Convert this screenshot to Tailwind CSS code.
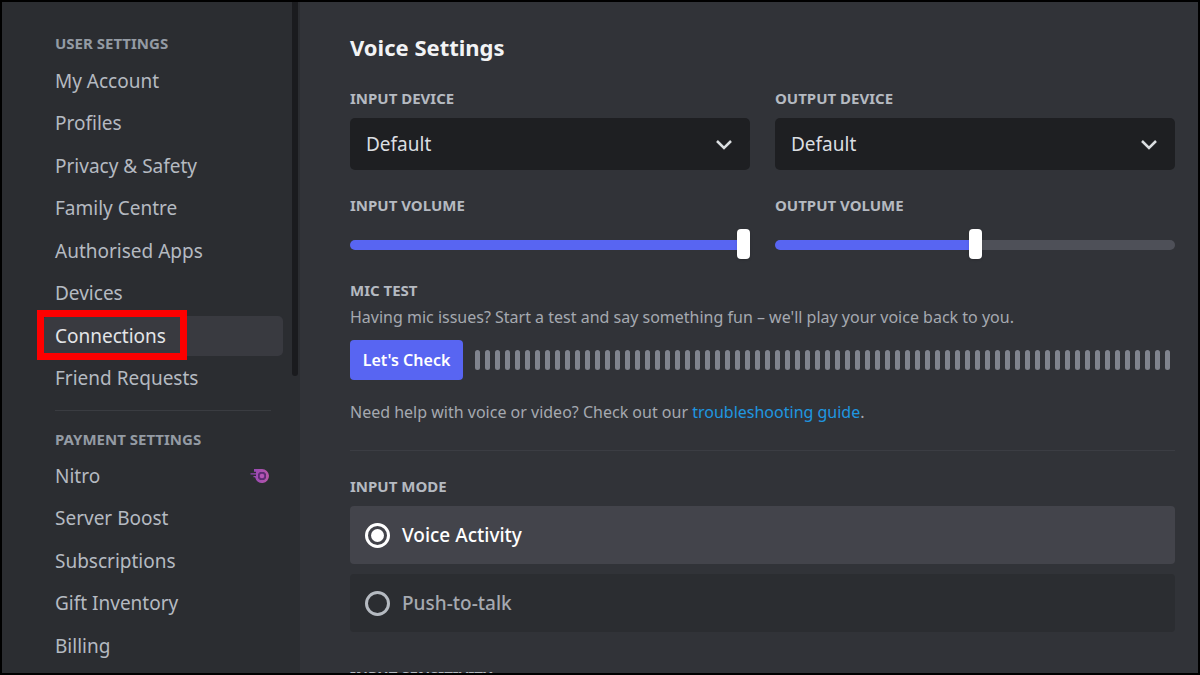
<!DOCTYPE html>
<html lang="en">
<head>
  <meta charset="UTF-8">
  <meta name="viewport" content="width=device-width, initial-scale=1.0">
  <title>Voice Settings</title>
  <script src="https://cdn.jsdelivr.net/npm/@tailwindcss/browser@4"></script>
</head>
<body class="flex h-screen overflow-hidden border-2 border-black bg-[#313338] font-['Noto_Sans',sans-serif] text-[#b5bac1]">

  <!-- Sidebar -->
  <nav class="relative w-[298px] shrink-0 bg-[#2b2d31] pt-[31px] pr-[17px] pl-[41px]">
    <h2 class="mb-2 px-3 text-[15px] leading-5 font-bold text-[#949ba4] uppercase">User Settings</h2>
    <ul class="text-[19px] leading-10">
      <li class="mb-0.5 even:mb-[3px]"><a href="#" class="block px-3">My Account</a></li>
      <li class="mb-0.5 even:mb-[3px]"><a href="#" class="block px-3">Profiles</a></li>
      <li class="mb-0.5 even:mb-[3px]"><a href="#" class="block px-3">Privacy &amp; Safety</a></li>
      <li class="mb-0.5 even:mb-[3px]"><a href="#" class="block px-3">Family Centre</a></li>
      <li class="mb-0.5 even:mb-[3px]"><a href="#" class="block px-3">Authorised Apps</a></li>
      <li class="mb-0.5 even:mb-[3px]"><a href="#" class="block px-3">Devices</a></li>
      <li class="relative mb-0.5 even:mb-[3px]">
        <a href="#" class="block rounded-[5px] bg-[#393a40] px-3 text-[#e3e5e8]">Connections</a>
        <!-- highlight frame -->
        <span class="pointer-events-none absolute -top-1.5 -left-1.5 h-[50px] w-[150px] border-7 border-[#fe0000]"></span>
      </li>
      <li class="mb-0.5 even:mb-[3px]"><a href="#" class="block px-3">Friend Requests</a></li>
    </ul>
    <hr class="mx-3 mt-3 border-[#3a3c41]">
    <h2 class="mt-[18px] mb-[7px] px-3 text-[15px] leading-5 font-bold text-[#949ba4] uppercase">Payment Settings</h2>
    <ul class="text-[19px] leading-10">
      <li class="mb-0.5 even:mb-[3px]">
        <a href="#" class="flex items-center justify-between pr-3.5 pl-3">
          Nitro
          <svg class="h-5 w-5" viewBox="0 0 20 20" fill="none">
            <defs>
              <linearGradient id="nitro" x1="0" y1="0" x2="1" y2="0">
                <stop offset="0" stop-color="#8f45b8"/>
                <stop offset="1" stop-color="#b957a8"/>
              </linearGradient>
            </defs>
            <path fill="url(#nitro)" fill-rule="evenodd" d="M5 3H13A7 7 0 1 1 6.1 11.300H4.500V10H7V8.600H1.500V7.200H7V5.800H5ZM13 6A4 4 0 1 0 13 14A4 4 0 1 0 13 6Z"/>
            <circle cx="13" cy="10" r="4" fill="#5f2c78"/>
            <circle cx="13" cy="10" r="2.300" fill="#b455b4"/>
          </svg>
        </a>
      </li>
      <li class="mb-0.5 even:mb-[3px]"><a href="#" class="block px-3">Server Boost</a></li>
      <li class="mb-0.5 even:mb-[3px]"><a href="#" class="block px-3">Subscriptions</a></li>
      <li class="mb-0.5 even:mb-[3px]"><a href="#" class="block px-3">Gift Inventory</a></li>
      <li class="mb-0.5 even:mb-[3px]"><a href="#" class="block px-3">Billing</a></li>
    </ul>
    <!-- scrollbar thumb -->
    <div class="absolute top-0 right-0.5 h-[374px] w-1.5 rounded-b-full bg-[#1a1b1e]"></div>
  </nav>

  <!-- Content -->
  <main class="min-w-0 flex-1 pt-[30px] pr-[23px] pl-[50px]">
    <h1 class="text-[22px] leading-[30px] font-bold text-[#f2f3f5]">Voice Settings</h1>

    <div class="mt-[26px] grid grid-cols-2 gap-x-[25px]">
      <div>
        <label for="inputDevice" class="block text-[15px] leading-5 font-bold uppercase">Input Device</label>
        <div class="relative mt-2.5">
          <select id="inputDevice" class="h-[52px] w-full appearance-none rounded-[5px] bg-[#1e1f22] px-4 text-[19px] text-[#dbdee1]">
            <option>Default</option>
          </select>
          <svg class="pointer-events-none absolute top-[15px] right-[15px] h-[22px] w-[22px]" viewBox="0 0 22 22" fill="none" stroke="#dbdee1" stroke-width="2.500"><path d="M4 8L11 15L18 8"/></svg>
        </div>
      </div>
      <div>
        <label for="outputDevice" class="block text-[15px] leading-5 font-bold uppercase">Output Device</label>
        <div class="relative mt-2.5">
          <select id="outputDevice" class="h-[52px] w-full appearance-none rounded-[5px] bg-[#1e1f22] px-4 text-[19px] text-[#dbdee1]">
            <option>Default</option>
          </select>
          <svg class="pointer-events-none absolute top-[15px] right-[15px] h-[22px] w-[22px]" viewBox="0 0 22 22" fill="none" stroke="#dbdee1" stroke-width="2.500"><path d="M4 8L11 15L18 8"/></svg>
        </div>
      </div>
    </div>

    <div class="mt-[25px] grid grid-cols-2 gap-x-[25px]">
      <div>
        <label for="inputVolume" class="block text-[15px] leading-5 font-bold uppercase">Input Volume</label>
        <input id="inputVolume" type="range" min="0" max="100" value="100" class="mt-[15px] block h-[30px] w-full appearance-none bg-transparent [&::-webkit-slider-runnable-track]:h-2.5 [&::-webkit-slider-runnable-track]:rounded-full [&::-webkit-slider-runnable-track]:bg-[#5865f2] [&::-webkit-slider-thumb]:-mt-[11px] [&::-webkit-slider-thumb]:h-[30px] [&::-webkit-slider-thumb]:w-[13px] [&::-webkit-slider-thumb]:appearance-none [&::-webkit-slider-thumb]:rounded-[4px] [&::-webkit-slider-thumb]:bg-white [&::-webkit-slider-thumb]:shadow">
      </div>
      <div>
        <label for="outputVolume" class="block text-[15px] leading-5 font-bold uppercase">Output Volume</label>
        <input id="outputVolume" type="range" min="0" max="100" value="50" class="mt-[15px] block h-[30px] w-full appearance-none bg-transparent [&::-webkit-slider-runnable-track]:h-2.5 [&::-webkit-slider-runnable-track]:rounded-full [&::-webkit-slider-runnable-track]:bg-[linear-gradient(to_right,#5865f2_50%,#4e5058_50%)] [&::-webkit-slider-thumb]:-mt-[11px] [&::-webkit-slider-thumb]:h-[30px] [&::-webkit-slider-thumb]:w-[13px] [&::-webkit-slider-thumb]:appearance-none [&::-webkit-slider-thumb]:rounded-[4px] [&::-webkit-slider-thumb]:bg-white [&::-webkit-slider-thumb]:shadow">
      </div>
    </div>

    <h2 class="mt-5 text-[15px] leading-5 font-bold uppercase">Mic Test</h2>
    <p class="mt-[5px] text-[16px] leading-6 text-[#a5a9b0]">Having mic issues? Start a test and say something fun – we'll play your voice back to you.</p>
    <div class="mt-[11px] flex items-center gap-3">
      <button type="button" class="h-10 w-[113px] shrink-0 rounded-[4px] bg-[#5865f2] text-[16px] font-semibold text-white">Let's Check</button>
      <div id="micMeter" class="flex flex-1 justify-between pr-1"></div>
    </div>
    <p class="mt-5 text-[16px] leading-6 text-[#a5a9b0]">Need help with voice or video? Check out our <a href="#" class="text-[#1f97e0]">troubleshooting guide</a>.</p>

    <hr class="mt-[26px] border-[#3b3d43]">

    <fieldset class="mt-[25px]">
      <legend class="text-[15px] leading-5 font-bold uppercase">Input Mode</legend>
      <label class="mt-2.5 flex h-[58px] items-center gap-3 rounded-[4px] bg-[#43444b] pl-[15px] text-[19px] font-medium text-white">
        <input type="radio" name="inputMode" checked class="grid size-[25px] appearance-none place-items-center rounded-full border-[3px] border-white before:size-[13px] before:rounded-full before:bg-white">
        Voice Activity
      </label>
      <label class="mt-2.5 flex h-[58px] items-center gap-3 rounded-[4px] bg-[#2b2d31] pl-[15px] text-[19px] font-medium text-[#a5a9b0]">
        <input type="radio" name="inputMode" class="size-[25px] appearance-none rounded-full border-[3px] border-[#b5bac1]">
        Push-to-talk
      </label>
    </fieldset>

    <h2 class="mt-[34px] text-[15px] leading-5 font-bold uppercase">Input Sensitivity</h2>
  </main>

  <script>
    const micMeter = document.getElementById("micMeter");
    const barCount = 70;

    for (let i = 0; i < barCount; i++) {
      const bar = document.createElement("span");
      bar.className = "h-5 w-[5px] rounded-full bg-[#80848e]";
      micMeter.appendChild(bar);
    }
  </script>
</body>
</html>
